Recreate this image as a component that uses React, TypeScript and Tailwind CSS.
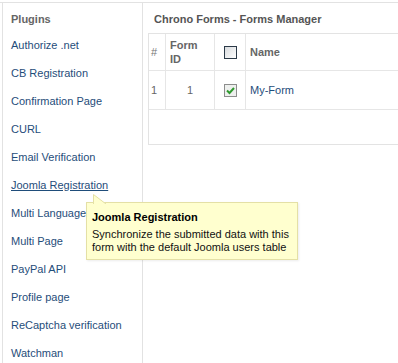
import React from "react";

const plugins = [
  "Authorize .net",
  "CB Registration",
  "Confirmation Page",
  "CURL",
  "Email Verification",
  "Joomla Registration",
  "Multi Language",
  "Multi Page",
  "PayPal API",
  "Profile page",
  "ReCaptcha verification",
  "Watchman",
];

function Checkbox({ checked }: { checked?: boolean }) {
  if (checked) {
    return (
      <svg width="13" height="13" viewBox="0 0 13 13" className="block">
        <rect x="0.5" y="0.5" width="12" height="12" fill="#eef0ee" stroke="#222" strokeDasharray="1 1" />
        <path d="M3 6.5 L5.5 9 L10 4" fill="none" stroke="#2f9a2f" strokeWidth="2" />
      </svg>
    );
  }
  return <div className="w-[13px] h-[13px] border border-[#2c3a48] bg-gradient-to-br from-[#d8dbde] to-white" />;
}

export default function App() {
  return (
    <div className="relative w-[398px] h-[363px] overflow-hidden bg-white pt-[2px] font-['Liberation_Sans',Arial,sans-serif] text-[11px] leading-[14px]">
      <div className="flex h-full border-t border-[#e2e2e2]">
        {/* Plugins list */}
        <div className="ml-[2px] w-[141px] shrink-0 border-l border-r border-[#e2e2e2] pl-[8px] pt-[9px]">
          <div className="font-bold text-[#666] mb-[5px]">Plugins</div>
          {plugins.map((p) => (
            <div key={p} className="py-[7px] text-[#1f4d7a]">
              <span className={p === "Joomla Registration" ? "underline" : ""}>{p}</span>
            </div>
          ))}
        </div>

        {/* Forms manager */}
        <div className="flex-1 min-w-0 pl-[5px]">
          <div className="pt-[9px] pl-[6px] mb-[7px] font-bold text-[#555]">Chrono Forms - Forms Manager</div>
          <div className="w-[300px] border border-[#e3e3e3]">
            <div className="grid grid-cols-[17px_49px_31px_1fr] h-[37px] border-b border-[#e6e6e6]">
              <div className="border-r border-[#e6e6e6] pl-[2px] flex items-center text-[#777]">#</div>
              <div className="border-r border-[#e6e6e6] pl-[4px] flex items-center font-bold text-[#666] leading-[14px]">
                Form
                <br />
                ID
              </div>
              <div className="border-r border-[#e6e6e6] flex items-center justify-center">
                <Checkbox />
              </div>
              <div className="pl-[4px] flex items-center font-bold text-[#666]">Name</div>
            </div>
            <div className="grid grid-cols-[17px_49px_31px_1fr] h-[39px] border-b border-[#e6e6e6]">
              <div className="border-r border-[#e6e6e6] pl-[2px] flex items-center text-[#666]">1</div>
              <div className="border-r border-[#e6e6e6] flex items-center justify-center text-[#666]">1</div>
              <div className="border-r border-[#e6e6e6] flex items-center justify-center">
                <Checkbox checked />
              </div>
              <div className="pl-[4px] flex items-center text-[#1f4d7a]">My-Form</div>
            </div>
            <div className="h-[34px]" />
          </div>
        </div>
      </div>

      {/* Tooltip */}
      <div className="absolute left-[86px] top-[202px] w-[212px] border border-[#e4e0a6] bg-[#ffffcf] px-[5px] pt-[7px] pb-[5px] shadow-[1px_1px_2px_rgba(0,0,0,0.08)]">
        <svg width="14" height="10" viewBox="0 0 14 10" className="absolute left-[6px] top-[-9px]">
          <path d="M0.5 10 L0.5 0.5 L13 10 Z" fill="#ffffcf" />
          <path d="M0.5 10 L0.5 0.5 L13 10" fill="none" stroke="#e4e0a6" />
        </svg>
        <div className="font-bold text-black">Joomla Registration</div>
        <div className="mt-[4px] text-[#111] leading-[13px]">
          Synchronize the submitted data with this
          <br />
          form with the default Joomla users table
        </div>
      </div>
    </div>
  );
}
